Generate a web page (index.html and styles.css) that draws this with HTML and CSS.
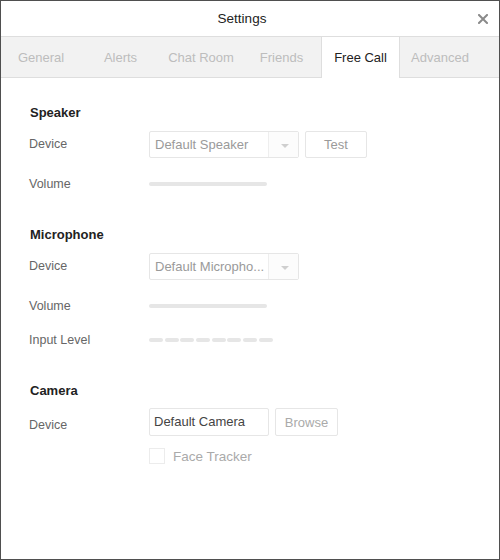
FILE: index.html
```html
<!DOCTYPE html>
<html>
<head>
<meta charset="utf-8">
<link rel="stylesheet" href="styles.css">
</head>
<body>
<div class="window">
  <div class="titlebar">
    <span class="title">Settings</span>
    <span class="close">
      <svg width="10" height="10" viewBox="0 0 10 10"><path d="M1 1L9 9M9 1L1 9" stroke="#8a8a8a" stroke-width="2" stroke-linecap="square"/></svg>
    </span>
  </div>
  <div class="tabs">
    <div class="tab">General</div>
    <div class="tab">Alerts</div>
    <div class="tab">Chat Room</div>
    <div class="tab">Friends</div>
    <div class="tab active">Free Call</div>
    <div class="tab">Advanced</div>
  </div>
  <div class="content">
    <div class="section">
      <div class="heading">Speaker</div>
      <div class="row">
        <div class="label">Device</div>
        <div class="select"><span class="value">Default Speaker</span><span class="arrow"></span></div>
        <div class="btn">Test</div>
      </div>
      <div class="row gap12">
        <div class="label">Volume</div>
        <div class="slider"></div>
      </div>
    </div>
    <div class="section">
      <div class="heading">Microphone</div>
      <div class="row">
        <div class="label">Device</div>
        <div class="select"><span class="value">Default Micropho...</span><span class="arrow"></span></div>
      </div>
      <div class="row gap12">
        <div class="label">Volume</div>
        <div class="slider"></div>
      </div>
      <div class="row gap6">
        <div class="label">Input Level</div>
        <div class="level"><span></span><span></span><span></span><span></span><span></span><span></span><span></span><span></span></div>
      </div>
    </div>
    <div class="section">
      <div class="heading">Camera</div>
      <div class="row">
        <div class="label cam">Device</div>
        <div class="camsel">Default Camera</div>
        <div class="btn browse">Browse</div>
      </div>
      <div class="row gap6">
        <div class="label"></div>
        <div class="check"></div>
        <div class="checklabel">Face Tracker</div>
      </div>
    </div>
  </div>
</div>
</body>
</html>
```
FILE: styles.css
```css
* { box-sizing: border-box; }
html, body { margin: 0; padding: 0; background: #fff; }
body { font-family: "Liberation Sans", Arial, sans-serif; font-size: 13px; }
.window {
  width: 500px; height: 560px;
  border: 1px solid #4f4f4f;
  background: #fff;
  display: flex; flex-direction: column;
}
.titlebar {
  height: 36px;
  border-bottom: 1px solid #dedede;
  display: flex; align-items: center; justify-content: center;
  position: relative;
}
.title { color: #222; font-size: 13.5px; margin-left: -16px; }
.close { position: absolute; right: 11px; top: 13px; width: 10px; height: 10px; display: flex; }
.tabs {
  height: 41px;
  background: #f2f2f2;
  border-bottom: 1px solid #dedede;
  display: flex;
}
.tab {
  width: 80px; flex: none;
  display: flex; align-items: center; justify-content: center;
  color: #bdbdbd; font-size: 13px;
  border-left: 1px solid transparent; border-right: 1px solid transparent;
}
.tab:nth-child(1) { width: 80px; }
.tab:nth-child(2) { width: 79px; }
.tab:nth-child(3) { width: 82px; }
.tab:nth-child(4) { width: 79px; }
.tab:nth-child(5) { width: 79px; }
.tab.active {
  background: #fff; color: #222;
  border-left-color: #dedede; border-right-color: #dedede;
  margin-bottom: -1px;
}
.content { padding: 25px 0 0 28px; }
.section { margin-bottom: 27px; }
.heading { height: 20px; line-height: 20px; font-weight: bold; color: #222; font-size: 13px; margin-bottom: 7px; padding-left: 1px; }
.row { display: flex; align-items: center; height: 28px; }
.gap12 { margin-top: 12px; }
.gap6 { margin-top: 6px; }
.label { width: 120px; flex: none; color: #666; font-size: 12.5px; }
.label.cam { padding-top: 5px; }
.select {
  width: 150px; height: 27px;
  border: 1px solid #e6e6e6; border-radius: 2px;
  display: flex;
}
.value { flex: 1; color: #9a9a9a; padding-left: 5px; line-height: 25px; font-size: 13px; white-space: nowrap; overflow: hidden; }
.arrow {
  width: 30px; flex: none;
  border-left: 1px solid #eeeeee;
  background: #fcfcfc;
  position: relative;
}
.arrow::after {
  content: ""; position: absolute; left: 12px; top: 12px;
  border-left: 4px solid transparent; border-right: 4px solid transparent;
  border-top: 4px solid #cfcfcf;
}
.btn {
  margin-left: 6px; width: 62px; height: 27px;
  border: 1px solid #e6e6e6; border-radius: 2px;
  color: #9a9a9a; display: flex; align-items: center; justify-content: center;
}
.slider { width: 118px; height: 4px; background: #e6e6e6; border-radius: 2px; }
.level { display: flex; gap: 1.7px; }
.level span { width: 14px; height: 4px; background: #e6e6e6; border-radius: 2px; }
.camsel {
  width: 120px; height: 28px;
  border: 1px solid #e6e6e6; border-radius: 2px;
  color: #444; padding-left: 4px; line-height: 26px;
}
.browse { width: 63px; height: 28px; color: #aaa; }
.check { width: 16px; height: 16px; border: 1px solid #ececec; }
.checklabel { margin-left: 8px; color: #aaa; font-size: 13.5px; }
```
